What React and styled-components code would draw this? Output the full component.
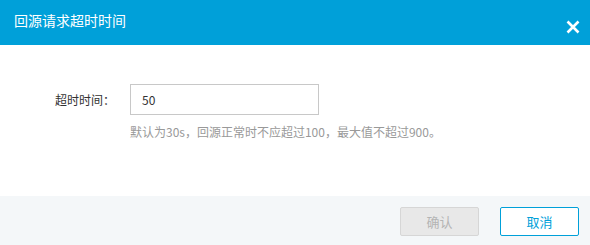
import React from "react";
import styled, { createGlobalStyle } from "styled-components";

const GlobalStyle = createGlobalStyle`
  body {
    margin: 0;
    background: #fff;
    font-family: "Noto Sans CJK SC", "Noto Sans", sans-serif;
  }
`;

const Dialog = styled.div`
  width: 590px;
  height: 245px;
  display: flex;
  flex-direction: column;
  background: #fff;
  overflow: hidden;
`;

const Header = styled.div`
  height: 45px;
  background: #00a0d9;
  display: flex;
  align-items: center;
  justify-content: space-between;
  padding: 0 5px 0 14px;
  box-sizing: border-box;
  color: #fff;
`;

const Title = styled.h3`
  margin: 0;
  font-size: 14px;
  font-weight: 400;
  margin-top: -5px;
`;

const CloseButton = styled.button`
  width: 24px;
  height: 24px;
  border: 0;
  padding: 0;
  background: transparent;
  display: flex;
  align-items: center;
  justify-content: center;
  margin-top: 9px;
  cursor: pointer;
`;

const Body = styled.div`
  flex: 1;
  padding: 39px 0 0 55px;
`;

const Row = styled.div`
  display: grid;
  grid-template-columns: 75px auto;
  align-items: center;
  row-gap: 8px;
`;

const Label = styled.label`
  font-size: 12px;
  color: #333;
`;

const Input = styled.input`
  width: 189px;
  height: 31px;
  box-sizing: border-box;
  border: 1px solid #c8c8c8;
  padding: 0 11px;
  font-family: inherit;
  font-size: 12px;
  color: #333;
  outline: none;
`;

const Hint = styled.div`
  grid-column: 2;
  font-size: 12px;
  color: #999;
`;

const Footer = styled.div`
  height: 49px;
  background: #f4f7f9;
  display: flex;
  justify-content: flex-end;
  align-items: flex-start;
  gap: 21px;
  padding: 11px 11px 0 0;
  box-sizing: border-box;
`;

const Button = styled.button`
  width: 79px;
  height: 29px;
  box-sizing: border-box;
  border-radius: 2px;
  font-family: inherit;
  font-size: 13px;
  border: 1px solid ${(p) => (p.$primary ? "#00a0d9" : "#d6d6d6")};
  background: ${(p) => (p.$primary ? "#fff" : "#e8e8e8")};
  color: ${(p) => (p.$primary ? "#00a0d9" : "#b4b4b4")};
  cursor: ${(p) => (p.disabled ? "not-allowed" : "pointer")};
`;

export default function App() {
  return (
    <>
      <GlobalStyle />
      <Dialog>
        <Header>
          <Title>回源请求超时时间</Title>
          <CloseButton aria-label="关闭">
            <svg width="14" height="14" viewBox="0 0 14 14">
              <path d="M1.5 1.5 L12.5 12.5 M12.5 1.5 L1.5 12.5" stroke="#fff" strokeWidth="2.6" />
            </svg>
          </CloseButton>
        </Header>
        <Body>
          <Row>
            <Label>超时时间：</Label>
            <Input defaultValue="50" />
            <Hint>默认为30s，回源正常时不应超过100，最大值不超过900。</Hint>
          </Row>
        </Body>
        <Footer>
          <Button disabled>确认</Button>
          <Button $primary>取消</Button>
        </Footer>
      </Dialog>
    </>
  );
}
